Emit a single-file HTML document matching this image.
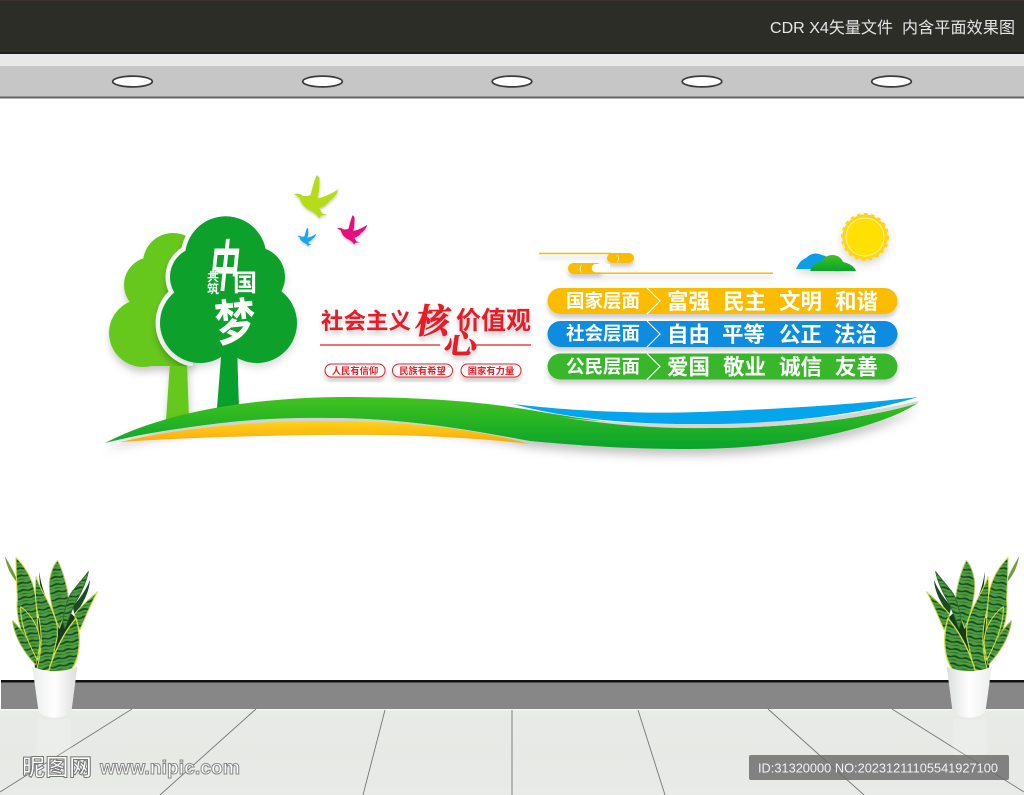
<!DOCTYPE html>
<html lang="zh"><head><meta charset="utf-8"><title>社会主义核心价值观</title>
<style>html,body{margin:0;padding:0;background:#fff}svg{display:block}
text{font-family:"Liberation Sans","Noto Sans CJK SC",sans-serif}
.c{font-family:"Noto Sans CJK SC","WenQuanYi Zen Hei",sans-serif}
.s{font-family:"Noto Serif CJK SC",serif;font-weight:700}</style></head>
<body>
<svg xmlns="http://www.w3.org/2000/svg" width="1024" height="795" viewBox="0 0 1024 795">
<defs>
<filter id="sh" x="-30%" y="-30%" width="160%" height="170%"><feDropShadow dx="1" dy="5" stdDeviation="4" flood-color="#000" flood-opacity=".22"/></filter>
<filter id="sh3" x="-30%" y="-30%" width="160%" height="170%"><feDropShadow dx="0" dy="4" stdDeviation="4" flood-color="#000" flood-opacity=".15"/></filter>
<filter id="sh2" x="-10%" y="-30%" width="120%" height="190%"><feDropShadow dx="0" dy="6" stdDeviation="5" flood-color="#000" flood-opacity=".25"/></filter>
<filter id="ts" x="-20%" y="-20%" width="140%" height="160%"><feDropShadow dx="0" dy="4" stdDeviation="2.5" flood-color="#000" flood-opacity=".2"/></filter>
<filter id="bl"><feGaussianBlur stdDeviation="3"/></filter>
<clipPath id="lt"><circle cx="173" cy="263" r="30"/><circle cx="152" cy="285" r="28"/><circle cx="143" cy="333" r="34"/><rect x="143" y="233" width="50" height="133"/></clipPath>
<linearGradient id="gh" x1="0" y1="0" x2="0" y2="1"><stop offset="0" stop-color="#42c21e"/><stop offset="1" stop-color="#08a32d"/></linearGradient>
<linearGradient id="og" x1="0" y1="0" x2="0" y2="1"><stop offset="0" stop-color="#ffd21a"/><stop offset="1" stop-color="#f8a80e"/></linearGradient>
<linearGradient id="pot" x1="0" y1="0" x2="1" y2="0"><stop offset="0" stop-color="#eceded"/><stop offset=".5" stop-color="#fff"/><stop offset="1" stop-color="#dcdddd"/></linearGradient>
<linearGradient id="fl" x1="0" y1="0" x2="0" y2="1"><stop offset="0" stop-color="#e9ebe8"/><stop offset=".5" stop-color="#e6e9e4"/><stop offset="1" stop-color="#e9ebe8"/></linearGradient>
<pattern id="lf" width="34" height="22" patternUnits="userSpaceOnUse" patternTransform="rotate(-10)">
<rect width="34" height="22" fill="#4e9c3f"/>
<path d="M0,4 Q9,1 17,5 T34,4 L34,10 Q25,13 17,10 T0,10Z" fill="#174a22"/>
<path d="M0,16 Q8,14 17,17 T34,16 L34,18 Q25,20 17,19 T0,18Z" fill="#276a30"/>
</pattern>
<path id="bird" d="M42,88 Q52,84 62,88 Q72,98 92,90 Q100,55 110,30 L118,38 Q120,70 113,100 Q140,95 175,73 Q168,95 150,107 Q137,124 118,130 L126,145 L142,150 L122,152 L118,160 Q105,142 85,134 Q64,122 58,98Z"/>
<g id="plant">
<g transform="translate(0,540) scale(.3333)">
<path d="M115,535 Q160,545 210,535 L215,640 Q160,690 110,640Z" fill="#fff" opacity=".2" filter="url(#bl)"/>
<path d="M15,50 C30,75 45,100 56,132 L50,126 C32,105 20,80 15,50Z" fill="#6f9d38"/>
<path d="M118,95 C122,135 135,170 155,205 L138,195 C125,165 117,130 118,95Z" fill="#12361a"/>
<path d="M100,240 L190,200 L235,240 L215,390 L105,395Z" fill="#143c1c"/>
<g stroke="#d3e04a" stroke-width="3" stroke-linejoin="round" fill="url(#lf)">
<path d="M173,62 C190,95 205,150 206,188 C195,220 185,245 178,265 C160,225 146,170 148,125 C152,100 160,75 173,62Z" stroke="#bcd060"/>
<path d="M270,120 C268,155 250,190 224,225 L218,200 C240,175 258,150 270,120Z" fill="#1a4a22" stroke="none"/>
<path d="M265,95 C258,130 240,165 222,195 L195,265 L188,245 C195,200 205,165 225,145 C240,125 255,110 265,95Z" stroke="#2f6d30"/>
<path d="M293,155 C275,185 255,235 240,270 C230,255 225,240 224,222 C245,195 270,175 293,155Z"/>
<path d="M48,52 C80,85 105,130 108,185 L120,350 L108,365 C75,310 45,240 52,180 C50,130 48,90 48,52Z"/>
<path d="M108,110 C120,150 160,200 172,260 L172,290 L150,390 L108,395 C125,340 130,280 112,215 C105,175 105,140 108,110Z"/>
<path d="M38,243 C65,270 95,310 112,355 L108,375 C80,345 45,300 38,243Z" stroke="#9dbb3f"/>
<path d="M62,200 C95,225 120,265 120,310 L112,360 C85,310 60,250 62,200Z"/>
<path d="M228,235 C242,280 245,350 212,392 L145,397 C160,340 190,280 228,235Z" stroke-width="4"/>
</g>
<path d="M97,380 Q165,408 232,380 L215,510 Q210,530 165,533 Q120,530 115,510Z" fill="url(#pot)"/>
</g></g>
</defs>

<rect width="1024" height="795" fill="#fff"/>
<!-- ceiling -->
<rect width="1024" height="53" fill="#2d2d28"/>
<rect width="1024" height="1" fill="#3a322e"/>
<rect y="52" width="1024" height="2" fill="#1f1f1c"/>
<rect y="54" width="1024" height="12" fill="#e8e8e8"/>
<rect y="66" width="1024" height="30.500" fill="#c6c6c6"/>
<rect y="96.500" width="1024" height="2" fill="#666"/>
<g fill="#fff" stroke="#3c3c3c" stroke-width="1.800">
<ellipse cx="132.500" cy="81.500" rx="19.800" ry="5.400"/><ellipse cx="322.500" cy="81.500" rx="19.800" ry="5.400"/><ellipse cx="512" cy="81.500" rx="19.800" ry="5.400"/><ellipse cx="702" cy="81.500" rx="19.800" ry="5.400"/><ellipse cx="891.500" cy="81.500" rx="19.800" ry="5.400"/>
</g>
<text x="770" y="33" font-size="16" fill="#e6e6e6" textLength="123" lengthAdjust="spacingAndGlyphs">CDR X4矢量文件</text>
<text x="902" y="33" font-size="16" fill="#e6e6e6" textLength="113" class="c">内含平面效果图</text>

<!-- wall bottom / floor -->
<rect y="680" width="1024" height="2.500" fill="#111"/>
<rect y="682.500" width="1024" height="26.500" fill="#878787"/>
<rect x="0" y="680" width="1" height="30" fill="#fff"/>
<rect y="709" width="1024" height="86" fill="url(#fl)"/>
<rect y="709" width="1024" height="1.500" fill="#f5f5f3"/>
<g stroke="#767676" stroke-width=".9" fill="none">
<path d="M132,709 L0,792M256,709 L160,795M385,710 L363,795M512,710 V795M638,710 L665,795M768,709 L864,795M892,709 L1024,792"/>
</g>

<use href="#plant"/>
<use href="#plant" transform="translate(1024,0) scale(-1,1)"/>

<!-- trees -->
<g fill="#66c81e" filter="url(#sh)">
<path d="M170,362 H187 L189,420 H166Z"/>
<circle cx="173" cy="263" r="30"/><circle cx="152" cy="285" r="28"/><circle cx="143" cy="333" r="34"/><rect x="143" y="263" width="50" height="103"/>
</g>
<g clip-path="url(#lt)">
<g fill="#fff" stroke="#fff" stroke-width="9" filter="url(#sh)">
<circle cx="225.700" cy="257" r="40.700"/><circle cx="200" cy="277" r="30"/><circle cx="255" cy="277" r="30"/><circle cx="200" cy="323" r="40"/><circle cx="257" cy="323" r="40"/>
</g>
</g>
<g fill="#08a02c" filter="url(#sh3)">
<circle cx="225.700" cy="257" r="40.700"/><circle cx="200" cy="277" r="30"/><circle cx="255" cy="277" r="30"/><circle cx="200" cy="323" r="40"/><circle cx="257" cy="323" r="40"/><rect x="195" y="260" width="62" height="90"/>
</g>
<path d="M222,345 H237 L239,408 H217Z" fill="#08a02c"/>
<g fill="#fff" font-weight="700">
<text transform="translate(208,286) skewX(-6) scale(1.000,1.850)" font-size="30" class="c" fill="#fff">中</text>
<text x="233" y="291" font-size="24" class="c" fill="#fff">国</text>
<text transform="translate(217,342) rotate(-6) scale(1,1.200)" font-size="41" class="c" fill="#fff">梦</text>
</g>
<text x="207" y="281" font-size="12" font-weight="700" fill="#fff" class="c" stroke="#08a02c" stroke-width=".6" paint-order="stroke">共</text>
<text x="207" y="293" font-size="12" font-weight="700" fill="#fff" class="c" stroke="#08a02c" stroke-width=".6" paint-order="stroke">筑</text>

<!-- birds -->
<g transform="translate(280,165) scale(.3333)" filter="url(#sh)">
<use href="#bird" fill="#b5dc12"/>
<use href="#bird" fill="#e6097e" transform="translate(143,130) scale(.68)"/>
<use href="#bird" fill="#12a9ee" transform="translate(34,175) scale(.43)"/>
</g>

<!-- hills -->
<path d="M105,443 C165,412 250,398 340,397 C410,397 470,400 530,410 C590,420 640,428 710,428 C790,428 870,418 918,403 C880,428 790,449 690,449 C620,449 575,445 530,441 C470,430 400,417 320,418 C240,419 165,428 105,443Z" fill="url(#gh)" filter="url(#sh2)"/>
<path d="M150,434 C220,421 270,417 330,418 C400,418 470,430 528,441 C470,433 400,424 330,423 C260,423 210,427 150,434Z" fill="#d2d2d2"/>
<path d="M120,442 C180,428 250,421 330,421 C410,421 480,430 530,444 C470,437 400,434 320,435 C240,436 180,438 120,442Z" fill="url(#og)"/>
<path d="M560,417 C610,425 660,429 710,428 C790,428 870,418 918,403 L918,401 C860,414 790,424 690,424 C640,424 600,422 560,417Z" fill="#d6d6d6"/>
<path d="M513,404 C570,411 640,414 700,412 C780,409 860,404 918,397 C870,412 790,425 690,424 C620,424 560,417 513,404Z" fill="#05a5ee"/>

<!-- red title -->
<g filter="url(#ts)">
<text x="321" y="329" font-size="22.500" font-weight="700" fill="#e81d25" class="c">社会主义</text>
<text x="456" y="329" font-size="25" font-weight="700" fill="#e81d25" class="c">价值观</text>
<text transform="translate(414,333) skewX(-10)" font-size="34" fill="#e81d25" stroke="#e81d25" stroke-width=".8" class="s">核</text>
<text transform="translate(443,354) skewX(-8) scale(1.100,.95)" font-size="30" fill="#e81d25" stroke="#e81d25" stroke-width=".5" class="s">心</text>
</g>
<path d="M320,345 H440M475,345 H531" stroke="#e81d25" stroke-width="1.300"/>
<g filter="url(#ts)" fill="#fff" stroke="#e81d25" stroke-width="1">
<rect x="325" y="364" width="60" height="13" rx="6.500"/><rect x="392.500" y="364" width="60" height="13" rx="6.500"/><rect x="461" y="364" width="60" height="13" rx="6.500"/>
</g>
<g font-size="9.300" font-weight="700" fill="#e81d25" text-anchor="middle" class="c">
<text x="355" y="374" class="c">人民有信仰</text><text x="422.500" y="374" class="c">民族有希望</text><text x="491" y="374" class="c">国家有力量</text>
</g>

<!-- sun & clouds -->
<g filter="url(#sh3)">
<circle cx="865" cy="237" r="22.500" fill="#ffd51a" stroke="#ffd51a" stroke-width="3" stroke-dasharray="3.500 3.500"/>
<circle cx="865" cy="237" r="19" fill="#ffe000" stroke="#fff1a0" stroke-width="1"/>
<path d="M796,269 Q800,260 806,258 Q813,251 822,255 Q828,256 832,262 L835,269Z" fill="#0d9ce8"/>
<path d="M810,271 Q813,263 822,261 Q826,255 832,255 Q840,255 843,262 Q853,264 856,271Z" fill="url(#gh)"/>
</g>
<g fill="#fbbc05" filter="url(#ts)">
<rect x="539" y="252.700" width="72" height="1.500"/>
<rect x="607" y="253" width="27" height="10" rx="5"/>
<rect x="568" y="263" width="34" height="11" rx="5.500"/>
<rect x="590" y="272.500" width="183" height="1.500"/>
</g>
<rect x="596" y="264" width="14" height="8.300" fill="#fff"/><circle cx="596" cy="268.200" r="4.200" fill="#fff"/>
<path d="M582,264.500 a5,5 0 0 0 0,8.500 a7,7 0 0 1 0,-8.500Z" fill="#fff"/><path d="M617,254.500 a5,5 0 0 1 0,8 a7,7 0 0 0 0,-8Z" fill="#fff"/>

<!-- bars -->
<g filter="url(#ts)">
<rect x="547.500" y="288" width="350" height="26" rx="13" fill="#fbbc05"/>
<rect x="547.500" y="321" width="350" height="26" rx="13" fill="#0a8ce0"/>
<rect x="547.500" y="353.500" width="350" height="26" rx="13" fill="#37b729"/>
</g>
<g fill="none" stroke="#fff" stroke-width="1.200">
<path d="M647,288 L660,301 L647,314M647,321 L660,334 L647,347M647,353.500 L660,366.500 L647,379.500"/>
</g>
<g fill="#fff" font-weight="700" class="c">
<text x="566" y="307.500" font-size="18.500" class="c">国家层面</text>
<text x="566" y="340" font-size="18.500" class="c">社会层面</text>
<text x="566" y="373" font-size="18.500" class="c">公民层面</text>
<g font-size="21.500">
<text x="667" y="309" class="c">富强</text><text x="723" y="309" class="c">民主</text><text x="779" y="309" class="c">文明</text><text x="835" y="309" class="c">和谐</text>
<text x="667" y="342" class="c">自由</text><text x="722" y="342" class="c">平等</text><text x="779" y="342" class="c">公正</text><text x="834" y="342" class="c">法治</text>
<text x="667" y="374.500" class="c">爱国</text><text x="723" y="374.500" class="c">敬业</text><text x="779" y="374.500" class="c">诚信</text><text x="835" y="374.500" class="c">友善</text>
</g></g>

<!-- watermark -->
<text x="22" y="775" font-size="23" font-weight="700" fill="#fff" stroke="#777" stroke-width="1" class="c" textLength="70">昵图网</text>
<text x="100" y="774" font-size="19" font-weight="700" fill="#fff" stroke="#888" stroke-width="1" textLength="140" lengthAdjust="spacingAndGlyphs">www.nipic.com</text>
<rect x="749" y="755" width="260" height="25" rx="2" fill="#6a6a6a" opacity=".82"/>
<text x="758" y="772.500" font-size="13.300" fill="#f2f2f2" textLength="240" lengthAdjust="spacingAndGlyphs">ID:31320000 NO:20231211105541927100</text>
</svg>
</body></html>
